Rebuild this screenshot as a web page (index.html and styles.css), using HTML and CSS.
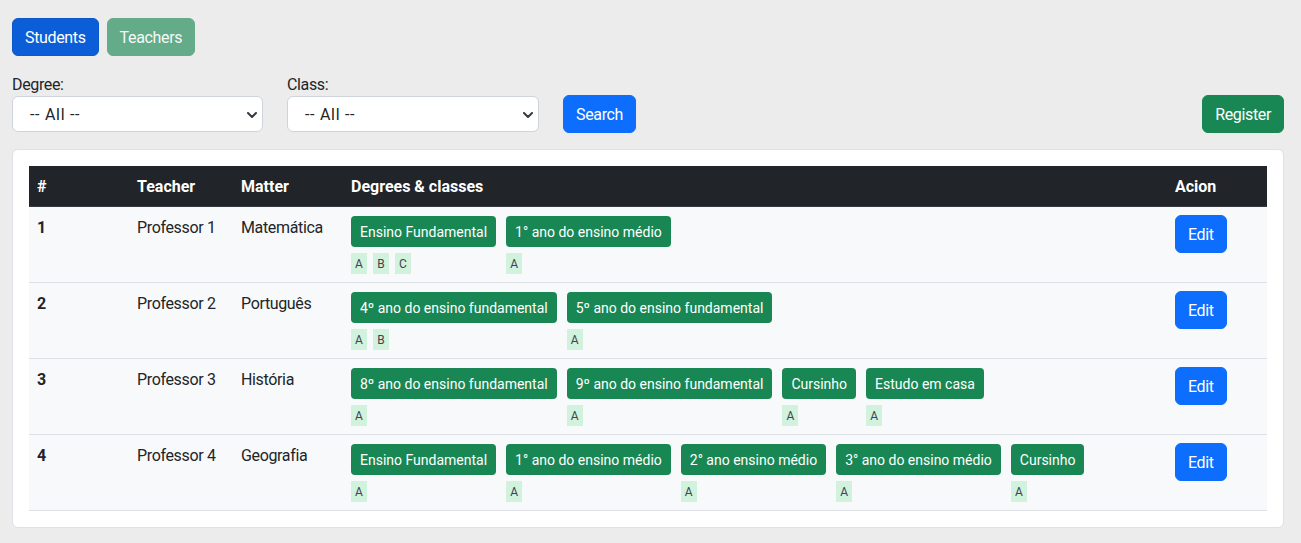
FILE: index.html
```html
<!DOCTYPE html>
<html lang="en">
<head>
<meta charset="utf-8">
<title>Teachers</title>
<link rel="stylesheet" href="styles.css">
</head>
<body>
<div class="page">
  <div class="tabs">
    <button class="btn btn-primary-active">Students</button>
    <button class="btn btn-success-faded">Teachers</button>
  </div>
  <div class="filters">
    <div class="field">
      <label class="label">Degree:</label>
      <div class="select"><span class="select-text">-- All --</span><svg class="chev" viewBox="0 0 10 6" width="10" height="6"><path d="M1 1l4 4 4-4" fill="none" stroke="#343a40" stroke-width="2" stroke-linecap="round" stroke-linejoin="round"/></svg></div>
    </div>
    <div class="field">
      <label class="label">Class:</label>
      <div class="select"><span class="select-text">-- All --</span><svg class="chev" viewBox="0 0 10 6" width="10" height="6"><path d="M1 1l4 4 4-4" fill="none" stroke="#343a40" stroke-width="2" stroke-linecap="round" stroke-linejoin="round"/></svg></div>
    </div>
    <button class="btn btn-primary search">Search</button>
    <button class="btn btn-success register">Register</button>
  </div>
  <div class="card">
    <table class="table">
      <thead>
        <tr>
          <th class="c-num">#</th>
          <th class="c-teacher">Teacher</th>
          <th class="c-matter">Matter</th>
          <th>Degrees &amp; classes</th>
          <th class="c-action">Acion</th>
        </tr>
      </thead>
      <tbody>
        <tr>
          <th>1</th>
          <td>Professor 1</td>
          <td>Matemática</td>
          <td class="cell-tags">
            <div class="groups">
              <div class="group"><span class="tag">Ensino Fundamental</span><div class="badges"><span class="badge">A</span><span class="badge">B</span><span class="badge">C</span></div></div>
              <div class="group"><span class="tag">1° ano do ensino médio</span><div class="badges"><span class="badge">A</span></div></div>
            </div>
          </td>
          <td class="cell-action"><button class="btn btn-primary">Edit</button></td>
        </tr>
        <tr>
          <th>2</th>
          <td>Professor 2</td>
          <td>Português</td>
          <td class="cell-tags">
            <div class="groups">
              <div class="group"><span class="tag">4º ano do ensino fundamental</span><div class="badges"><span class="badge">A</span><span class="badge">B</span></div></div>
              <div class="group"><span class="tag">5º ano do ensino fundamental</span><div class="badges"><span class="badge">A</span></div></div>
            </div>
          </td>
          <td class="cell-action"><button class="btn btn-primary">Edit</button></td>
        </tr>
        <tr>
          <th>3</th>
          <td>Professor 3</td>
          <td>História</td>
          <td class="cell-tags">
            <div class="groups">
              <div class="group"><span class="tag">8º ano do ensino fundamental</span><div class="badges"><span class="badge">A</span></div></div>
              <div class="group"><span class="tag">9º ano do ensino fundamental</span><div class="badges"><span class="badge">A</span></div></div>
              <div class="group"><span class="tag">Cursinho</span><div class="badges"><span class="badge">A</span></div></div>
              <div class="group"><span class="tag">Estudo em casa</span><div class="badges"><span class="badge">A</span></div></div>
            </div>
          </td>
          <td class="cell-action"><button class="btn btn-primary">Edit</button></td>
        </tr>
        <tr>
          <th>4</th>
          <td>Professor 4</td>
          <td>Geografia</td>
          <td class="cell-tags">
            <div class="groups">
              <div class="group"><span class="tag">Ensino Fundamental</span><div class="badges"><span class="badge">A</span></div></div>
              <div class="group"><span class="tag">1° ano do ensino médio</span><div class="badges"><span class="badge">A</span></div></div>
              <div class="group"><span class="tag">2° ano ensino médio</span><div class="badges"><span class="badge">A</span></div></div>
              <div class="group"><span class="tag">3° ano do ensino médio</span><div class="badges"><span class="badge">A</span></div></div>
              <div class="group"><span class="tag">Cursinho</span><div class="badges"><span class="badge">A</span></div></div>
            </div>
          </td>
          <td class="cell-action"><button class="btn btn-primary">Edit</button></td>
        </tr>
      </tbody>
    </table>
  </div>
</div>
</body>
</html>
```
FILE: styles.css
```css
* { box-sizing: border-box; }
html, body { margin: 0; padding: 0; }
body {
  background: #ececec;
  font-family: "Segoe UI", Roboto, "Liberation Sans", sans-serif;
  font-size: 16px;
  line-height: 1.5;
  color: #212529;
  letter-spacing: -0.35px;
}
.page { padding: 18px 17px 0 12px; }

.btn {
  display: inline-block;
  font: inherit;
  font-size: 16px;
  line-height: 24px;
  letter-spacing: -0.35px;
  padding: 7px 12px 5px;
  border: 1px solid transparent;
  border-radius: 6px;
  color: #fff;
  cursor: pointer;
}
.btn-primary { background: #0d6efd; border-color: #0d6efd; }
.btn-primary-active { background: #0b5ed7; border-color: #0a58ca; }
.btn-success { background: #198754; border-color: #198754; }
.btn-success-faded { background: #64ab8a; border-color: #64ab8a; color: #f4f9f6; }

.tabs { display: flex; gap: 8px; }

.filters {
  display: flex;
  align-items: flex-end;
  gap: 24px;
  margin-top: 16px;
}
.field { display: flex; flex-direction: column; width: 251px; }
.field + .field { width: 252px; }
.label { display: block; line-height: 24px; padding-top: 1px; margin-bottom: -1px; color: #212529; }
.select {
  display: flex;
  align-items: center;
  justify-content: space-between;
  height: 36px;
  margin-bottom: 1px;
  background: #fff;
  border: 1px solid #ced4da;
  border-radius: 6px;
  padding: 2px 5px 0 17px;
  color: #212529;
}
.select-text { letter-spacing: 0.7px; }
.chev { display: block; }
.register { margin-left: auto; }

.card {
  margin-top: 16px;
  background: #fff;
  border: 1px solid #dee2e6;
  border-radius: 6px;
  padding: 16px;
}
.table { width: 100%; border-collapse: collapse; }
.table th, .table td {
  padding: 9px 8px 7px;
  text-align: left;
  vertical-align: top;
  border-bottom: 1px solid #dee2e6;
}
.table thead th {
  background: #212529;
  color: #fff;
  font-weight: 700;
  letter-spacing: 0;
  border-bottom-color: #373b3e;
}
.table tbody th, .table tbody td { background: #f8f9fa; }
.table tbody th { font-weight: 700; }
.table tbody td.cell-tags { padding-top: 8px; padding-bottom: 8px; }
.table tbody td.cell-action { padding-top: 8px; }
.c-num { width: 100px; }
.c-teacher { width: 104px; }
.c-matter { width: 110px; }
.c-action { width: 100px; }

.groups { display: flex; flex-wrap: wrap; gap: 0 10px; }
.group { display: flex; flex-direction: column; align-items: flex-start; }
.tag {
  display: inline-block;
  background: #198754;
  color: #fff;
  font-size: 14px;
  line-height: 21px;
  letter-spacing: 0;
  padding: 6px 9px 4px;
  border-radius: 4px;
  margin-top: 1px;
}
.badges { display: flex; gap: 6px; margin-top: 6px; }
.badge {
  display: inline-block;
  background: #d1f2dd;
  color: #3d4550;
  font-size: 12px;
  letter-spacing: 0;
  line-height: 20px;
  height: 21px;
  padding: 1px 3px 0;
  min-width: 16px;
  text-align: center;
}
```
